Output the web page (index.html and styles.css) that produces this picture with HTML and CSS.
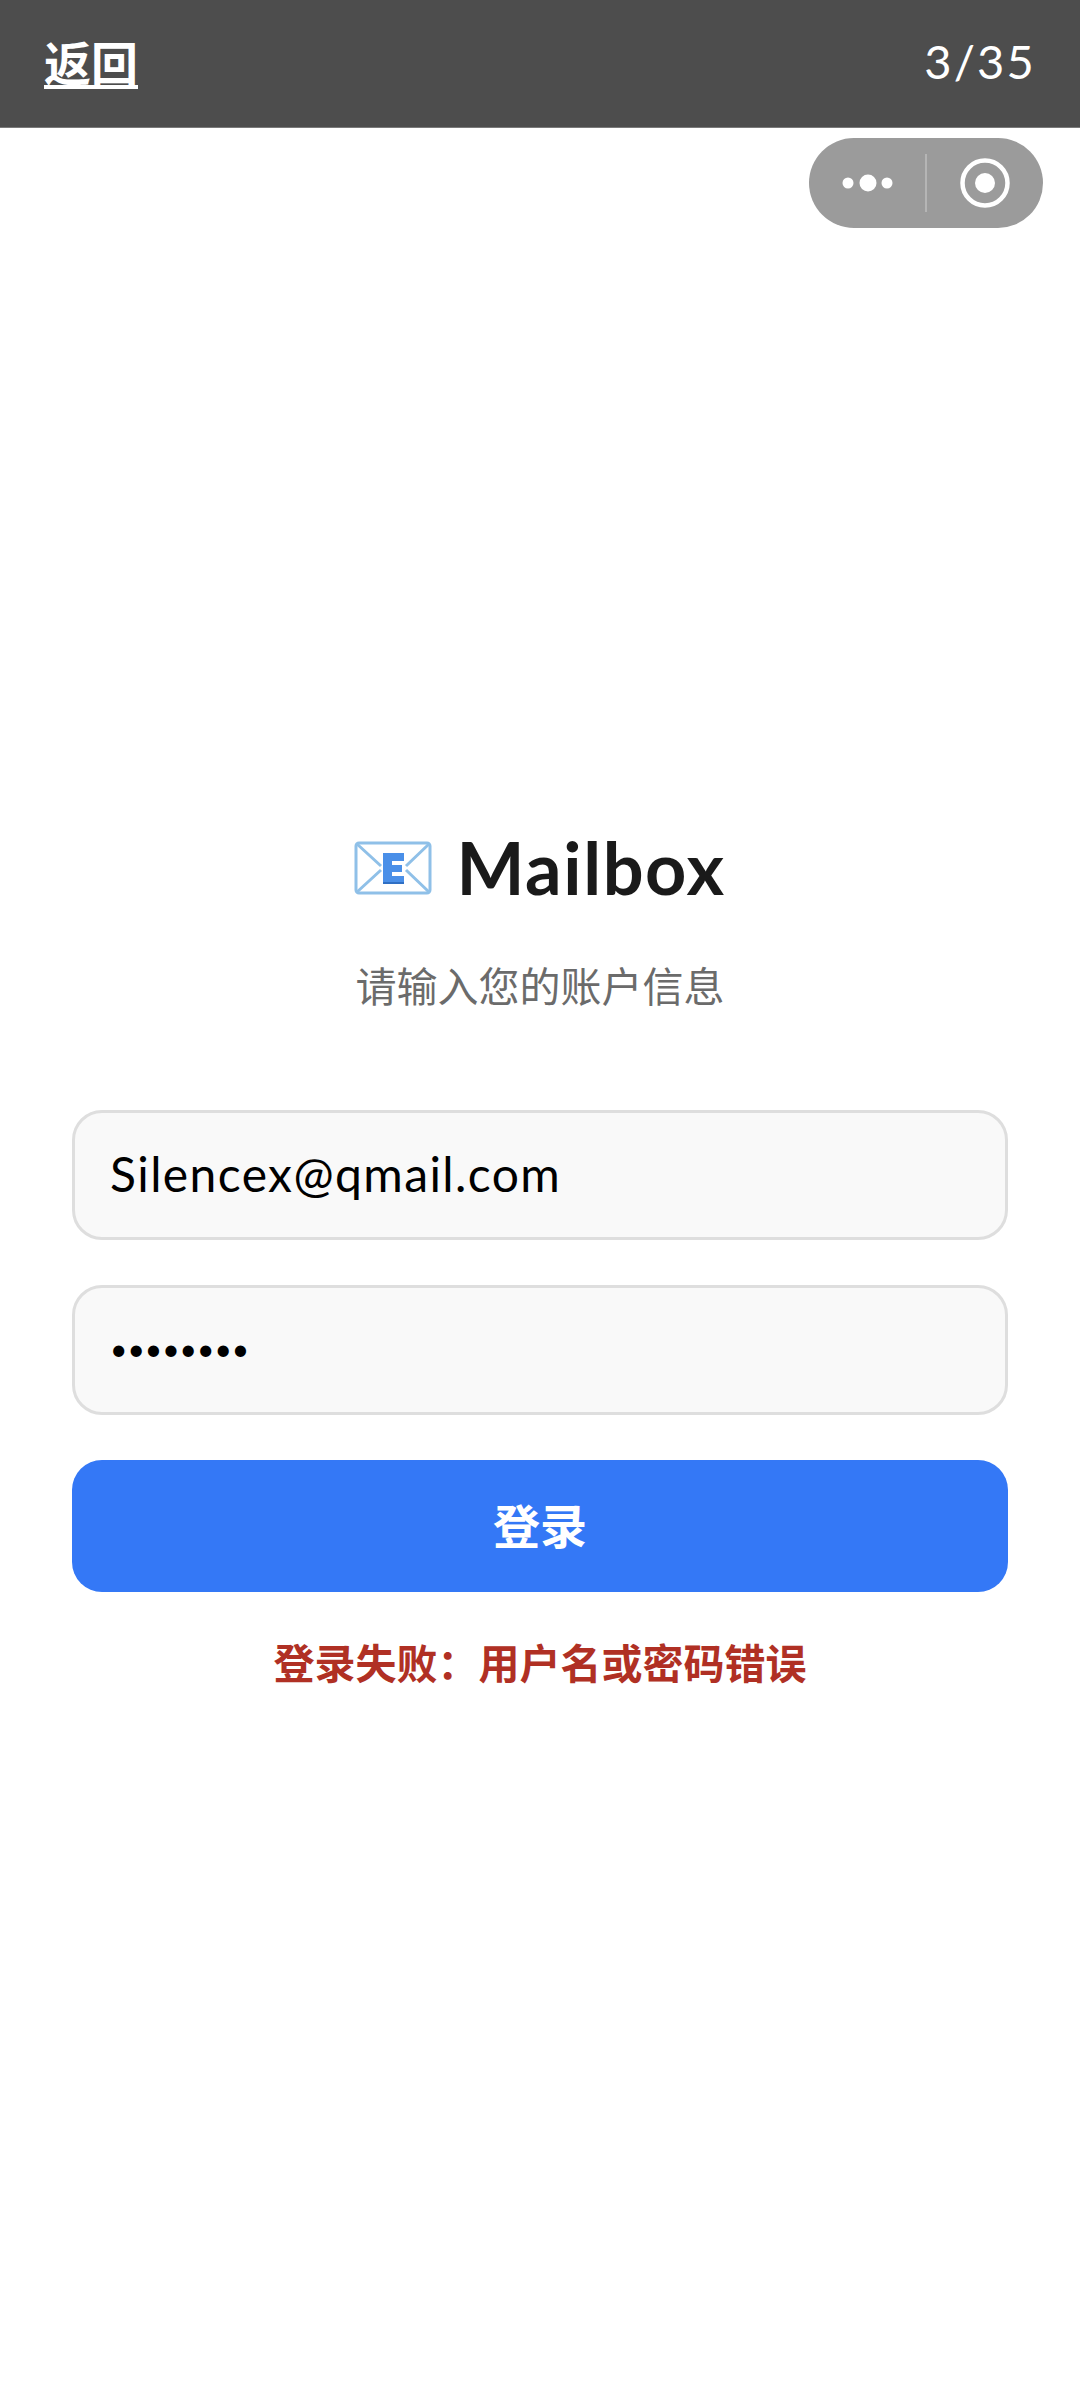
FILE: index.html
```html
<!DOCTYPE html>
<html lang="zh-CN">
<head>
    <meta charset="UTF-8">
    <meta name="viewport" content="width=device-width, initial-scale=1.0">
    <title>Mailbox</title>
    <link rel="stylesheet" href="styles.css">
</head>
<body>
    <header class="topbar">
        <a class="back" href="#">返回</a>
        <span class="pager">3/35</span>
    </header>

    <div class="capsule">
        <svg class="capsule-more" width="52" height="20" viewBox="0 0 52 20">
            <circle cx="6" cy="10" r="5.5" fill="#fff"/>
            <circle cx="26" cy="10" r="8.5" fill="#fff"/>
            <circle cx="45" cy="10" r="5.5" fill="#fff"/>
        </svg>
        <span class="capsule-line"></span>
        <svg class="capsule-close" width="50" height="50" viewBox="0 0 50 50">
            <circle cx="25" cy="25" r="22.5" fill="none" stroke="#fff" stroke-width="4.5"/>
            <circle cx="25" cy="25" r="10" fill="#fff"/>
        </svg>
    </div>

    <main class="login">
        <h1 class="title">
            <svg class="title-icon" width="78" height="54" viewBox="0 0 78 54">
                <rect x="2" y="2" width="74" height="50" rx="3" fill="#fff" stroke="#8fc0e8" stroke-width="3"/>
                <path d="M3 3 L27 25 M75 3 L52 25 M3 51 L27 29 M75 51 L52 29" fill="none" stroke="#8fc0e8" stroke-width="3"/>
                <path d="M29 12 H50 V20 H38 V24 H48 V31 H38 V35 H50 V43 H29 Z" fill="#4a8fe8"/>
                <path d="M29 43 H50 V41 H29 Z" fill="#2f6fc4"/>
            </svg>
            <span class="title-text">Mailbox</span>
        </h1>
        <p class="subtitle">请输入您的账户信息</p>

        <form class="form">
            <input class="field" type="text" value="Silencex@qmail.com">
            <input class="field field-pass" type="password" value="12345678">
            <button class="submit" type="button">登录</button>
        </form>
        <p class="error">登录失败&#xFF1A;用户名或密码错误</p>
    </main>
</body>
</html>
```

FILE: styles.css
```css
* {
    margin: 0;
    padding: 0;
    box-sizing: border-box;
}
html, body {
    height: 100%;
}
body {
    background: #fff;
    font-family: "Lato", "Noto Sans CJK SC", sans-serif;
    color: #000;
}
.topbar {
    height: 128px;
    background: #4d4d4d;
    border-bottom: 1px solid #7a7a7a;
    padding: 0 44px 6px;
    display: flex;
    justify-content: space-between;
    align-items: center;
    color: #fff;
    font-size: 47px;
}
.back {
    color: #fff;
    font-weight: 700;
    text-decoration: underline;
    text-underline-offset: 4px;
}
.pager {
    letter-spacing: 2.2px;
}
.capsule {
    position: absolute;
    top: 138px;
    left: 809px;
    width: 234px;
    height: 90px;
    border-radius: 45px;
    background: #9b9b9b;
    display: flex;
    align-items: center;
}
.capsule-more {
    margin-left: 33px;
}
.capsule-line {
    width: 2px;
    height: 58px;
    margin-left: 31px;
    background: #b5b5b5;
}
.capsule-close {
    margin-left: 33px;
}
.login {
    padding: 696px 72px 0;
    display: flex;
    flex-direction: column;
    align-items: center;
}
.title {
    display: flex;
    align-items: center;
    gap: 24px;
    height: 88px;
    font-size: 72px;
    font-weight: 700;
    letter-spacing: 1.6px;
    color: #1a1a1a;
}
.title-text {
    margin-top: -3px;
}
.subtitle {
    margin-top: 45px;
    font-size: 41px;
    line-height: 60px;
    color: #6b6b6b;
}
.form {
    width: 100%;
    margin-top: 93px;
    display: flex;
    flex-direction: column;
    gap: 45px;
}
.field {
    width: 100%;
    height: 130px;
    padding: 0 36px 4px 35px;
    border: 3px solid #dedede;
    border-radius: 30px;
    background: #f9f9f9;
    font-family: inherit;
    font-size: 48px;
    letter-spacing: 1.4px;
    color: #000;
    outline: none;
}
.field-pass {
    font-size: 30px;
    letter-spacing: 0;
}
.submit {
    height: 132px;
    padding-bottom: 6px;
    border: none;
    border-radius: 30px;
    background: #3478f6;
    color: #fff;
    font-family: inherit;
    font-size: 47px;
    font-weight: 700;
}
.error {
    margin-top: 42px;
    font-size: 41px;
    font-weight: 700;
    line-height: 60px;
    color: #b03024;
}
```
